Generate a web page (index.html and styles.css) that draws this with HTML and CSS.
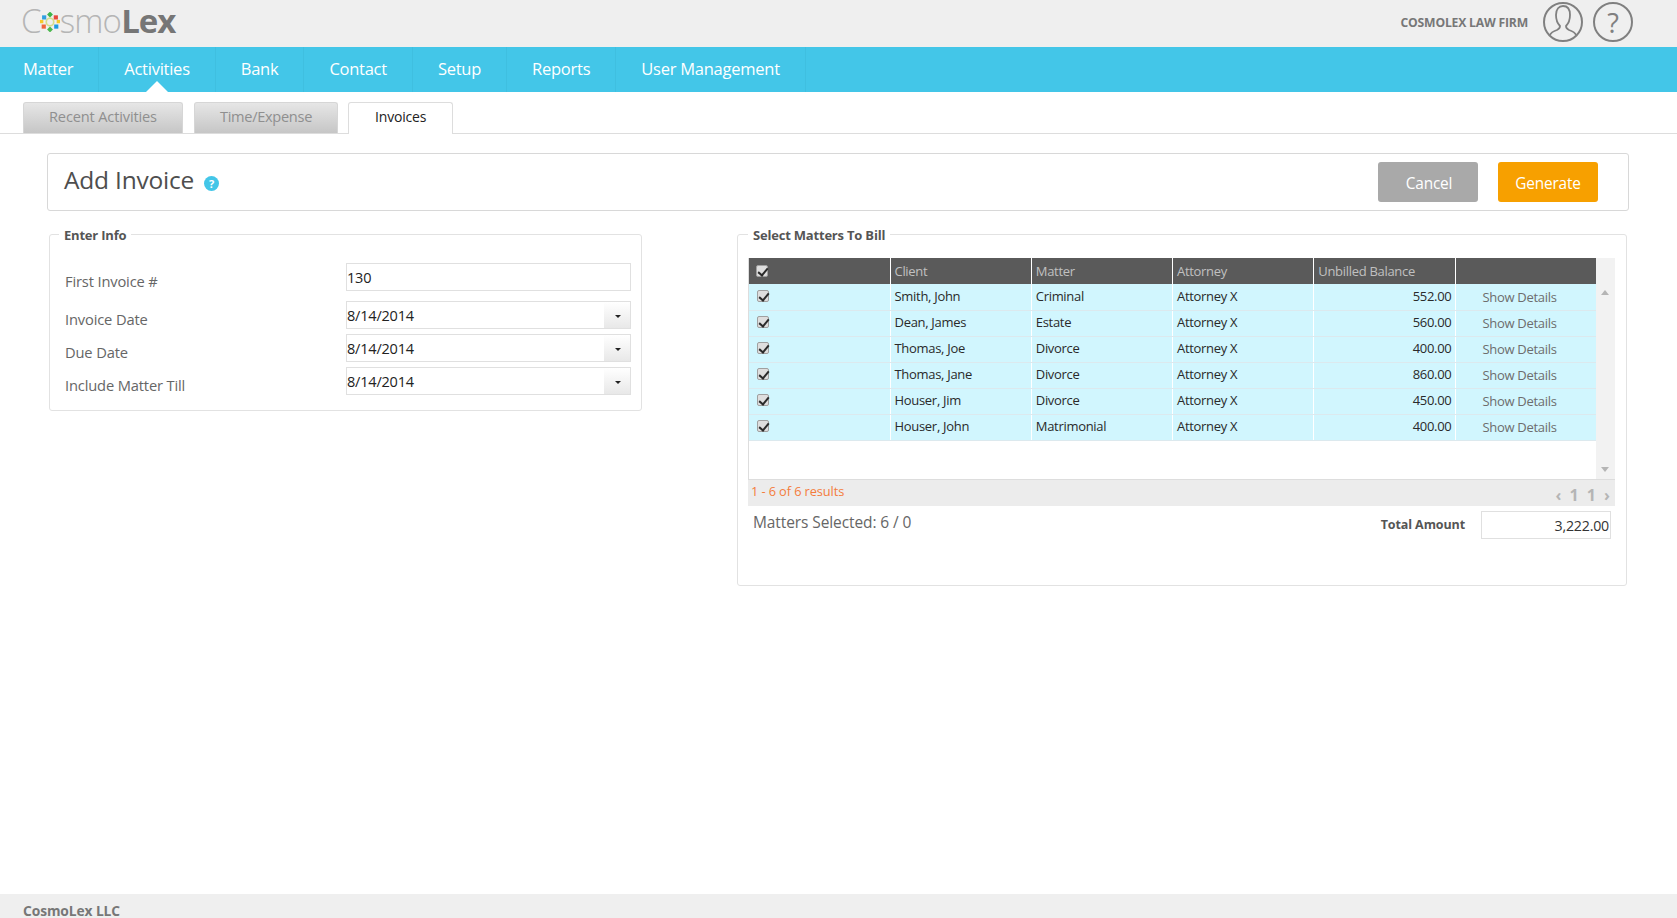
FILE: index.html
```html
<!DOCTYPE html>
<html lang="en">
<head>
<meta charset="utf-8">
<title>CosmoLex - Add Invoice</title>
<link rel="stylesheet" href="styles.css">
</head>
<body>
<header class="topbar">
  <div class="logo"><span class="logo-thin">C</span><svg class="logo-flower" viewBox="0 0 24 24" aria-hidden="true"><circle cx="12" cy="12" r="4.5" fill="none" stroke="#d5dd8a" stroke-width="2"/><rect x="9.5" y="0.5" width="5" height="5" fill="#3cb54a" transform="rotate(45 12 3)"/><rect x="9.5" y="18.5" width="5" height="5" fill="#4cb84f" transform="rotate(45 12 21)"/><rect x="2.5" y="4" width="5" height="5" fill="#2f9fe0"/><rect x="16.5" y="4" width="5" height="5" fill="#e8483c"/><rect x="2" y="15" width="5" height="5" fill="#f0643c"/><rect x="17" y="15" width="5" height="5" fill="#1e9be0"/><rect x="0" y="9.5" width="4" height="4" fill="#f6c92a"/><rect x="20" y="9.5" width="4" height="4" fill="#f6c92a"/></svg><span class="logo-thin">smo</span><span class="logo-bold">Lex</span></div>
  <div class="top-right">
    <span class="firm">COSMOLEX LAW FIRM</span>
    <svg class="round-icon" viewBox="0 0 40 40" aria-hidden="true"><circle cx="20" cy="20" r="19" fill="none" stroke="#808080" stroke-width="2"/><path d="M7 33c1-3 4-4 7-5 2-1 3-2 3-4-2-2-4-6-4-11 0-6 3-9 7-9s7 3 7 9c0 5-2 9-4 11 0 2 1 3 3 4 3 1 6 2 7 5" fill="none" stroke="#808080" stroke-width="1.8"/></svg>
    <span class="help-round">?</span>
  </div>
</header>

<nav class="mainnav">
  <a class="nav-item">Matter</a>
  <a class="nav-item nav-active">Activities</a>
  <a class="nav-item">Bank</a>
  <a class="nav-item">Contact</a>
  <a class="nav-item">Setup</a>
  <a class="nav-item">Reports</a>
  <a class="nav-item">User Management</a>
</nav>

<div class="tabs">
  <a class="tab tab-recent">Recent Activities</a>
  <a class="tab tab-time">Time/Expense</a>
  <a class="tab tab-on">Invoices</a>
</div>

<main class="content">
  <section class="title-card">
    <h1 class="title">Add Invoice</h1>
    <span class="help-dot">?</span>
    <div class="actions">
      <button class="btn btn-cancel">Cancel</button>
      <button class="btn btn-go">Generate</button>
    </div>
  </section>

  <div class="columns">
    <fieldset class="box box-info">
      <legend>Enter Info</legend>
      <div class="form-row form-row-first">
        <label>First Invoice #</label>
        <div class="field">130</div>
      </div>
      <div class="form-row">
        <label>Invoice Date</label>
        <div class="field field-date">8/14/2014<span class="drop"></span></div>
      </div>
      <div class="form-row">
        <label>Due Date</label>
        <div class="field field-date">8/14/2014<span class="drop"></span></div>
      </div>
      <div class="form-row">
        <label>Include Matter Till</label>
        <div class="field field-date">8/14/2014<span class="drop"></span></div>
      </div>
    </fieldset>

    <fieldset class="box box-matters">
      <legend>Select Matters To Bill</legend>
      <div class="grid">
        <div class="grid-main">
          <div class="grid-body">
            <table>
              <thead>
                <tr><th><span class="chk"></span></th><th>Client</th><th>Matter</th><th>Attorney</th><th>Unbilled Balance</th><th></th></tr>
              </thead>
              <tbody>
                <tr><td><span class="chk"></span></td><td>Smith, John</td><td>Criminal</td><td>Attorney X</td><td class="num">552.00</td><td class="link">Show Details</td></tr>
                <tr><td><span class="chk"></span></td><td>Dean, James</td><td>Estate</td><td>Attorney X</td><td class="num">560.00</td><td class="link">Show Details</td></tr>
                <tr><td><span class="chk"></span></td><td>Thomas, Joe</td><td>Divorce</td><td>Attorney X</td><td class="num">400.00</td><td class="link">Show Details</td></tr>
                <tr><td><span class="chk"></span></td><td>Thomas, Jane</td><td>Divorce</td><td>Attorney X</td><td class="num">860.00</td><td class="link">Show Details</td></tr>
                <tr><td><span class="chk"></span></td><td>Houser, Jim</td><td>Divorce</td><td>Attorney X</td><td class="num">450.00</td><td class="link">Show Details</td></tr>
                <tr><td><span class="chk"></span></td><td>Houser, John</td><td>Matrimonial</td><td>Attorney X</td><td class="num">400.00</td><td class="link">Show Details</td></tr>
              </tbody>
            </table>
          </div>
          <div class="scroll"><span class="arrow-up"></span><span class="arrow-down"></span></div>
        </div>
        <div class="grid-foot">
          <span class="results">1 - 6 of 6 results</span>
          <span class="pager">‹ 1 1 ›</span>
        </div>
      </div>
      <div class="summary">
        <span class="selected">Matters Selected: 6 / 0</span>
        <span class="total-label">Total Amount</span>
        <span class="total-box">3,222.00</span>
      </div>
    </fieldset>
  </div>
</main>

<footer class="footer">CosmoLex LLC</footer>
</body>
</html>
```

FILE: styles.css
```css
* { box-sizing: border-box; }
html, body { height: 100%; margin: 0; }
body {
  display: flex;
  flex-direction: column;
  height: 918px;
  overflow: hidden;
  background: #fff;
  font-family: "Open Sans", "Noto Sans", sans-serif;
  color: #555;
}

.topbar {
  height: 47px;
  flex: none;
  background: #efefef;
  display: flex;
  align-items: center;
  justify-content: space-between;
  padding: 0 44px 3px 21px;
}
.logo { display: flex; align-items: center; font-size: 33px; line-height: 47px; letter-spacing: -0.8px; margin-top: -4px; }
.logo-thin { color: #b5b5b5; font-weight: 300; }
.logo-bold { color: #767676; font-weight: 700; letter-spacing: -1px; }
.logo-flower { width: 20px; height: 20px; margin: 3px 0 0 -1px; }
.top-right { display: flex; align-items: center; }
.firm { font-size: 12.2px; font-weight: 700; color: #777; margin-right: 15px; letter-spacing: -0.2px; }
.round-icon { width: 40px; height: 40px; }
.help-round {
  width: 40px; height: 40px; margin-left: 10px;
  border: 2px solid #808080; border-radius: 50%;
  display: flex; align-items: center; justify-content: center;
  font-size: 27px; color: #808080;
}

.mainnav { height: 45px; flex: none; background: #43c6e8; display: flex; }
.nav-item {
  position: relative;
  padding: 0 25px;
  line-height: 44px;
  font-size: 16.5px;
  color: #fff;
  border-right: 1px solid #3fbfe0;
  letter-spacing: -0.25px;
}
.nav-item:first-child { padding-left: 23px; }
.nav-active::after {
  content: "";
  position: absolute;
  left: 50%;
  bottom: 0;
  margin-left: -11px;
  border: 11px solid transparent;
  border-top: 0;
  border-bottom-color: #fff;
}

.tabs {
  height: 42px;
  flex: none;
  padding: 10px 0 0 23px;
  display: flex;
  gap: 11px;
  border-bottom: 1px solid #ddd;
}
.tab {
  height: 31px;
  padding: 0 25px;
  line-height: 26px;
  font-size: 14.6px;
  border-radius: 3px 3px 0 0;
  letter-spacing: -0.2px;
}
.tab-recent, .tab-time {
  color: #8f8f8f;
  background: linear-gradient(#e6e6e6, #c6c6c6);
  border: 1px solid #d6d6d6;
  border-bottom: 0;
}
.tab-recent { letter-spacing: -0.15px; }
.tab-time { letter-spacing: -0.3px; }
.tab-on {
  color: #222;
  background: #fff;
  border: 1px solid #ddd;
  border-bottom: 0;
  height: 32px;
  margin-left: -1px;
  padding: 0 26px;
  font-size: 14px;
  line-height: 28px;
}

.content { flex: 1; min-height: 0; padding: 19px 48px 0 47px; }

.title-card {
  height: 58px;
  border: 1px solid #d8d8d8;
  border-radius: 3px;
  display: flex;
  align-items: center;
  padding: 0 30px 0 16px;
}
.title { margin: -5px 0 0; font-size: 24.5px; font-weight: 400; color: #4e4e4e; letter-spacing: -0.2px; }
.help-dot {
  width: 15px; height: 15px; margin: 3px 0 0 10px;
  border-radius: 50%;
  background: #43c6e8; color: #fff;
  font-size: 11px; font-weight: 700; line-height: 15px; text-align: center;
}
.actions { margin-left: auto; display: flex; gap: 20px; margin-top: -1px; }
.btn {
  width: 100px; height: 40px;
  border: 0; border-radius: 3px;
  color: #fff;
  font: 400 15.4px "Open Sans", "Noto Sans", sans-serif;
  letter-spacing: -0.2px;
  padding: 4px 0 0;
}
.btn-cancel { background: #a9a9a9; padding-left: 2px; }
.btn-go { background: #f7a000; }

.columns { display: flex; align-items: flex-start; margin: 14px 0 0 2px; }
.box {
  margin: 0;
  padding: 0;
  border: 1px solid #e2e2e2;
  border-radius: 3px;
  min-width: 0;
}
.box legend {
  padding: 1px 5px 0;
  font-size: 13px;
  font-weight: 700;
  color: #555;
  line-height: 18px;
  letter-spacing: -0.2px;
}
.box-info legend { margin-left: -6px; }
.box-matters legend { margin-left: 0; }
.box-info { width: 593px; height: 186px; padding: 19px 10px 0 15px; }
.box-matters { width: 890px; height: 361px; margin-left: 95px; padding: 14px 10px 0 10px; }

.form-row { display: flex; justify-content: space-between; height: 33px; }
.form-row-first { height: 38px; }
.form-row label { font-size: 14.7px; color: #666; padding-top: 6px; letter-spacing: -0.15px; line-height: 24px; }
.form-row-first label { padding-top: 6px; }
.field {
  position: relative;
  width: 285px;
  height: 28px;
  padding-left: 0;
  border: 1px solid #e0e0e0;
  font-size: 14.5px;
  line-height: 27px;
  color: #222;
  letter-spacing: -0.2px;
}
.drop {
  position: absolute;
  top: 0; right: 0; bottom: 0;
  width: 26px;
  background: linear-gradient(#fff, #e8e8e8);
}
.drop::after {
  content: "";
  position: absolute;
  left: 11px; top: 13px;
  border: 3px solid transparent;
  border-top: 3px solid #222;
  border-bottom: 0;
}

.grid { width: 867px; border-top: 0; }
.grid-main { display: flex; height: 221px; border-left: 1px solid #ddd; }
.grid-body { width: 847px; }
table {
  width: 847px;
  table-layout: fixed;
  border-collapse: collapse;
  font-size: 13px;
  letter-spacing: -0.3px;
}
th {
  height: 26px;
  padding: 0 4px 1px;
  background: #5a5a5a;
  color: #c0c0c0;
  font-weight: 400;
  text-align: left;
  border-left: 1px solid #fff;
}
td {
  height: 26px;
  padding: 0 4px 2px;
  background: #d1f6fe;
  color: #2a2a2a;
  border-left: 1px solid #fff;
  border-bottom: 1px solid #dce9ee;
}
th:first-child, td:first-child { border-left: 0; width: 141px; }
td:first-child { padding-left: 8px; }
th:first-child { padding-left: 7px; }
td.num { text-align: right; padding-right: 3px; }
td.link { padding-left: 27px; color: #6d6d6d; padding-top: 1px; padding-bottom: 1px; }
th:last-child, td:last-child { width: 141px; }
.chk {
  display: block;
  width: 12px; height: 12px;
  border: 1px solid #a0a0a0;
  border-radius: 2px;
  background: #dedede;
  position: relative;
}
.chk::after {
  content: "";
  position: absolute;
  left: 3px; top: 0;
  width: 4px; height: 8px;
  border: solid #2a2a2a;
  border-width: 0 2px 2px 0;
  transform: rotate(40deg);
}
.scroll { position: relative; width: 19px; background: #f2f2f2; }
.arrow-up, .arrow-down { position: absolute; left: 5px; border: 4px solid transparent; }
.arrow-up { top: 32px; border-top: 0; border-bottom: 5px solid #b5b5b5; }
.arrow-down { bottom: 7px; border-bottom: 0; border-top: 5px solid #b5b5b5; }

.grid-foot {
  height: 27px;
  background: #ececec;
  border-top: 1px solid #ddd;
  display: flex;
  justify-content: space-between;
  padding: 0 5px 0 3px;
  font-size: 12.8px;
  line-height: 22px;
}
.results { color: #f47c3c; letter-spacing: -0.1px; }
.pager { color: #b5b5b5; font-weight: 700; font-size: 16px; line-height: 30px; word-spacing: 4px; }

.summary { display: flex; align-items: flex-start; padding: 5px 4px 0 5px; width: 867px; }
.selected { font-size: 15.5px; color: #666; margin-right: auto; letter-spacing: -0.1px; line-height: 22px; }
.total-label { font-size: 12.5px; font-weight: 700; color: #555; line-height: 28px; margin-right: 16px; letter-spacing: -0.1px; }
.total-box {
  width: 130px; height: 28px;
  border: 1px solid #e0e0e0;
  text-align: right;
  font-size: 14.2px;
  line-height: 27px;
  padding-right: 1px;
  color: #333;
  letter-spacing: -0.2px;
}

.footer {
  height: 24px;
  flex: none;
  background: #efefef;
  padding: 7px 0 0 23px;
  font-size: 13.8px;
  font-weight: 700;
  color: #777;
  line-height: 20px;
  letter-spacing: -0.1px;
}
```
